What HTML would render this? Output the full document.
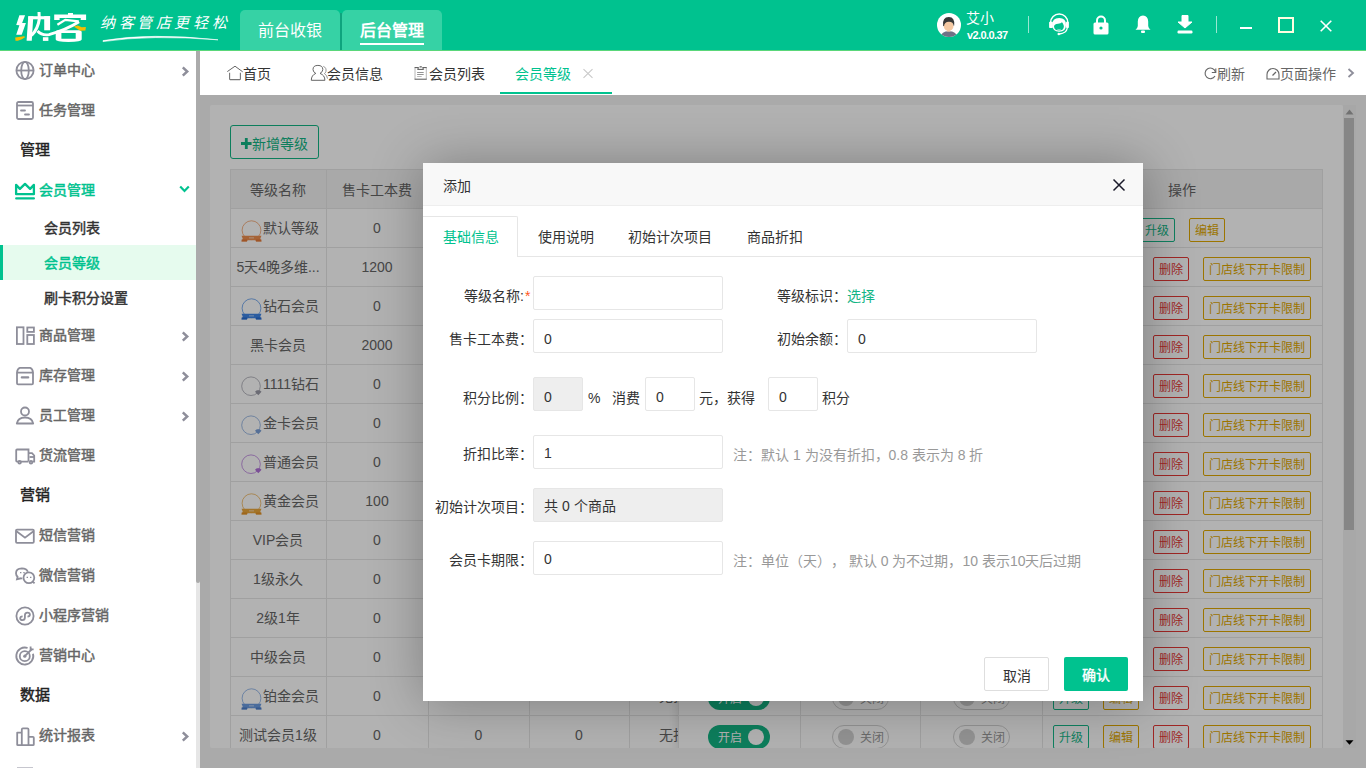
<!DOCTYPE html>
<html lang="zh-CN"><head><meta charset="utf-8"><title>nake</title>
<style>
*{box-sizing:border-box;}
html,body{margin:0;padding:0;}
body{text-spacing-trim:space-all;width:1366px;height:768px;overflow:hidden;position:relative;font-family:"Liberation Sans",sans-serif;font-size:14px;color:#333;background:#fff;}
.abs{position:absolute;}
.t{position:absolute;white-space:nowrap;line-height:20px;}
svg{position:absolute;overflow:visible;}
.side .it{position:absolute;left:39px;font-size:14px;color:#666;-webkit-text-stroke:0.45px currentColor;line-height:20px;white-space:nowrap;}
.side .sec{position:absolute;left:20px;font-size:15px;color:#222;-webkit-text-stroke:0.45px currentColor;line-height:20px;}
.side .sub{position:absolute;left:44px;font-size:14px;color:#333;-webkit-text-stroke:0.45px currentColor;line-height:20px;}
.cell{position:absolute;text-align:center;font-size:14px;color:#666;line-height:20px;white-space:nowrap;overflow:hidden;}
.btn{position:absolute;height:24px;border:1px solid;border-radius:2px;font-size:12px;line-height:24px;text-align:center;white-space:nowrap;}
.bg{border-color:#16b98a;color:#16b98a;}
.by{border-color:#e0a800;color:#e0a800;}
.br{border-color:#e53935;color:#e53935;}
.inp{position:absolute;border:1px solid #e6e6e6;border-radius:2px;background:#fff;font-size:14px;color:#333;}
.lbl{position:absolute;font-size:14px;color:#333;line-height:20px;white-space:nowrap;text-align:right;}
</style></head><body>

<div class="abs" style="left:0;top:0;width:1366px;height:50px;background:#00c28f"></div>
<div class="abs" style="left:0;top:50px;width:1366px;height:1px;background:#5ad77a"></div>
<svg style="left:0;top:0" width="100" height="50" viewBox="0 0 100 50"><g fill="#fff"><path d="M19.4 15.2 L25.1 15.2 L22.1 22.9 L25.9 22.9 L21.7 34.7 L16.2 34.7 L19.4 25.3 L16.2 25.1Z"/><path d="M28.3 16.2 L33.3 16.2 L31.8 40.7 L26.6 40.7Z"/><path d="M28.3 16.2 H50.1 V19.3 H28.3Z"/><path d="M44.2 16.2 H50.1 V30.3 H44.2Z"/><path d="M42.9 37.2 H48.4 V40.9 H42.9Z"/><path d="M68 13 H73 V15 H68Z"/><path d="M54.2 14.4 H86.1 V20.1 H80.7 V17.9 H59.6 V20.1 H54.2Z"/><path d="M55.7 32 Q55.7 30.3 58 30.3 H79.5 Q81.7 30.3 81.7 32 V39.5 Q81.7 41.9 68.5 41.9 Q55.7 41.9 55.7 39.5Z M61.4 33 V38.7 H75.7 V33Z" fill-rule="evenodd"/></g><path d="M39 12 L39.3 19 Q38 29 31.5 35.5" stroke="#fff" stroke-width="3" fill="none"/><path d="M57.4 24.8 L65.3 19.8 L78.7 21.4" stroke="#fff" stroke-width="2.2" fill="none"/><path d="M37.5 31 Q42 35.8 49 34.6 Q66 30 79 21.8" stroke="#fff" stroke-width="2.9" fill="none"/><path d="M15.2 37.5 L23.9 36.2 L25.4 37 L21.9 39.2 L17.9 40.7 L15.5 40.7Z" fill="#f6bd00"/><path d="M73.7 26.6 L77.7 25.6 L81.7 27.3 L85.9 27.1 L85.4 30.5 L80.2 30.8Z" fill="#f6bd00"/></svg>
<div class="t" style="left:100px;top:12px;font-family:'Liberation Serif',serif;font-size:15px;line-height:22px;color:#fff;letter-spacing:3.6px;font-style:italic;">纳客管店更轻松</div>
<svg style="left:100px;top:33px" width="130" height="10" viewBox="0 0 130 10"><path d="M3 7.6 Q50 -0.5 118 6.8 Q50 1.5 3 8.6Z" fill="#fff" stroke="#fff" stroke-width="0.6"/></svg>
<div class="abs" style="left:240px;top:10px;width:100px;height:40px;background:#36d2a5;border-radius:5px 5px 0 0"></div>
<div class="abs" style="left:342px;top:10px;width:100px;height:40px;background:#36d2a5;border-radius:5px 5px 0 0"></div>
<div class="abs" style="left:340px;top:13px;width:2px;height:37px;background:#0ea47e"></div>
<div class="t" style="left:258px;top:20px;font-size:16px;line-height:22px;color:#fff;">前台收银</div>
<div class="t" style="left:360px;top:20px;font-size:16px;line-height:22px;color:#fff;font-weight:bold;">后台管理</div>
<div class="abs" style="left:360px;top:43px;width:64px;height:2px;background:#fff"></div>
<svg style="left:937px;top:13px" width="24" height="24" viewBox="0 0 24 24"><circle cx="12" cy="12" r="12" fill="#fff"/><clipPath id="cc"><circle cx="12" cy="12" r="12"/></clipPath><g clip-path="url(#cc)"><path d="M3.5 24.5 Q4 18.2 11.8 18.2 Q19.6 18.2 20.5 24.5Z" fill="#6f7286"/><rect x="10.2" y="15" width="3" height="3.6" fill="#f2c4a0"/><ellipse cx="11.6" cy="12.9" rx="4.9" ry="5" fill="#f5c9a3"/><path d="M6.1 12.8 Q5.2 4 11.9 4.1 Q18 4.2 17.2 12.6 L16.6 12.8 Q16.3 8.6 11.8 8.7 Q7.4 8.8 7 13.2Z" fill="#383838"/></g></svg>
<div class="t" style="left:966px;top:8px;font-size:14px;line-height:20px;color:#fff;">艾小</div>
<div class="t" style="left:967px;top:27px;font-size:11px;line-height:14px;color:#fff;font-weight:bold;letter-spacing:-0.6px;margin-top:1px">v2.0.0.37</div>
<div class="abs" style="left:1028px;top:16px;width:1px;height:17px;background:rgba(255,255,255,.6)"></div>
<div class="abs" style="left:1216px;top:16px;width:1px;height:17px;background:rgba(255,255,255,.6)"></div>
<svg style="left:1045px;top:10px" width="30" height="30" viewBox="0 0 30 30"><path d="M5.6 12.5 A8.6 8.6 0 0 1 22.8 12.5" stroke="#fff" stroke-width="1.5" fill="none"/><path d="M7.3 15 Q7 8 14.2 8 Q21.2 8 21 15 Q21 21.8 14.2 21.8 Q7.5 21.8 7.3 15Z" fill="#fff"/><path d="M9 16.2 Q9.5 14.2 13 13.8 Q16 13.6 17 12.3 Q18.2 13.5 18.9 16 Q19 20.6 14 20.6 Q9.2 20.6 9 16.2Z" fill="#00c28f"/><path d="M12.3 19.3 Q14 20 15.8 19.3" stroke="#fff" stroke-width="0.8" fill="none" opacity=".6"/><rect x="4.1" y="11.7" width="3.8" height="6.3" rx="0.8" fill="#fff"/><rect x="21" y="11.7" width="2.9" height="6.3" rx="0.8" fill="#fff"/><path d="M22.3 18 Q21.5 23.2 14.5 24" stroke="#fff" stroke-width="1.3" fill="none"/><circle cx="13.8" cy="24" r="1.3" fill="#fff"/></svg>
<svg style="left:1093px;top:15px" width="16" height="20" viewBox="0 0 16 20"><path d="M4 8 V5.5 A4 4 0 0 1 12 5.5 V8" stroke="#fff" stroke-width="2" fill="none"/><rect x="0.5" y="7.5" width="15" height="12" rx="1.5" fill="#fff"/><circle cx="8" cy="13" r="1.6" fill="#00c28f"/></svg>
<svg style="left:1135px;top:15px" width="16" height="19" viewBox="0 0 16 19"><path d="M8 0.5 Q3 1 2.8 6.5 L2.8 11 Q2.5 13.5 0.5 14.8 L15.5 14.8 Q13.5 13.5 13.2 11 L13.2 6.5 Q13 1 8 0.5Z" fill="#fff"/><rect x="6" y="15.5" width="4" height="2.5" rx="1" fill="#fff"/></svg>
<svg style="left:1177px;top:15px" width="16" height="19" viewBox="0 0 16 19"><path d="M5 0.5 H11 V7 H15 L8 13 L1 7 H5Z" fill="#fff" stroke="#fff" stroke-width="1" stroke-linejoin="round"/><rect x="0.5" y="15.5" width="15" height="3" rx="1.2" fill="#fff"/></svg>
<div class="abs" style="left:1240px;top:27px;width:12px;height:2px;background:#fff"></div>
<div class="abs" style="left:1278px;top:17px;width:16px;height:16px;border:2px solid #fffde0"></div>
<svg style="left:1320px;top:20px" width="12" height="12" viewBox="0 0 12 12"><path d="M0.7 0.7 L11.3 11.3 M11.3 0.7 L0.7 11.3" stroke="#fff" stroke-width="1.6"/></svg>
<div class="side">
<div class="abs" style="left:196px;top:51px;width:4px;height:717px;background:#e6e6e6"></div>
<div class="abs" style="left:196px;top:51px;width:4px;height:532px;background:#ababab;border-radius:0 0 2px 2px"></div>
<svg style="left:15px;top:60px" width="20" height="20" viewBox="0 0 20 20"><circle cx="10" cy="10.5" r="8.6" stroke="#8e8e9a" stroke-width="1.8" fill="none"/><ellipse cx="10" cy="10.5" rx="3.8" ry="8.6" stroke="#8e8e9a" stroke-width="1.8" fill="none"/><path d="M1.5 10.5 H18.5" stroke="#8e8e9a" stroke-width="1.8" fill="none"/></svg>
<div class="it" style="top:60px">订单中心</div>
<svg style="left:181px;top:66px" width="8" height="11" viewBox="0 0 8 11"><path d="M1.8 1.4 L6.2 5.5 L1.8 9.6" stroke="#8e8e9a" stroke-width="2.5" fill="none"/></svg>
<svg style="left:16px;top:101px" width="20" height="20" viewBox="0 0 20 20"><rect x="1" y="1" width="16" height="17" rx="1.5" stroke="#8e8e9a" stroke-width="1.8" fill="none"/><path d="M1 4.5 H17" stroke="#8e8e9a" stroke-width="1.8" fill="none"/><path d="M5 9.5 H9 M9 13.5 H13" stroke="#8e8e9a" stroke-width="1.8" stroke-linecap="round"/></svg>
<div class="it" style="top:100px">任务管理</div>
<svg style="left:10px;top:175px" width="30" height="30" viewBox="0 0 30 30"><path d="M6.1 9.9 V19.2 H23.9 V9.9 L20.1 13.9 L15 8.9 L9.9 13.9 Z" stroke="#00c28f" stroke-width="2.3" stroke-linejoin="round" fill="none"/><rect x="5.1" y="22.3" width="19.9" height="2.3" rx="1.1" fill="#00c28f"/></svg>
<div class="it" style="top:180px;color:#00c28f">会员管理</div>
<svg style="left:179px;top:185px" width="11" height="8" viewBox="0 0 11 8"><path d="M1.2 1.5 L5.5 6 L9.8 1.5" stroke="#00c28f" stroke-width="2.2" fill="none"/></svg>
<svg style="left:15px;top:325px" width="20" height="20" viewBox="0 0 20 20"><rect x="1.9" y="2.3" width="6.6" height="16.7" stroke="#8e8e9a" stroke-width="1.8" fill="none"/><rect x="12.3" y="2.5" width="6.6" height="4.4" stroke="#8e8e9a" stroke-width="1.8" fill="none"/><rect x="12.3" y="10" width="6.6" height="9" stroke="#8e8e9a" stroke-width="1.8" fill="none"/></svg>
<div class="it" style="top:325px">商品管理</div>
<svg style="left:181px;top:331px" width="8" height="11" viewBox="0 0 8 11"><path d="M1.8 1.4 L6.2 5.5 L1.8 9.6" stroke="#8e8e9a" stroke-width="2.5" fill="none"/></svg>
<svg style="left:15px;top:365px" width="20" height="20" viewBox="0 0 20 20"><path d="M2 7.6 Q2.3 3.6 4.8 2.8 H15.2 Q17.7 3.6 18 7.6Z" stroke="#8e8e9a" stroke-width="1.8" fill="none" stroke-linejoin="round"/><path d="M2 7.6 V18.2 Q2 19.3 3.1 19.3 H16.9 Q18 19.3 18 18.2 V7.6" stroke="#8e8e9a" stroke-width="1.8" fill="none"/><path d="M6.8 12.4 H13.2" stroke="#8e8e9a" stroke-width="2.2" stroke-linecap="round"/></svg>
<div class="it" style="top:365px">库存管理</div>
<svg style="left:181px;top:371px" width="8" height="11" viewBox="0 0 8 11"><path d="M1.8 1.4 L6.2 5.5 L1.8 9.6" stroke="#8e8e9a" stroke-width="2.5" fill="none"/></svg>
<svg style="left:15px;top:405px" width="20" height="20" viewBox="0 0 20 20"><circle cx="10" cy="6.5" r="4" stroke="#8e8e9a" stroke-width="1.8" fill="none"/><path d="M1.8 18.5 Q3 12.5 10 12.5 Q17 12.5 18.2 18.5Z" stroke="#8e8e9a" stroke-width="1.8" fill="none" stroke-linejoin="round"/></svg>
<div class="it" style="top:405px">员工管理</div>
<svg style="left:181px;top:411px" width="8" height="11" viewBox="0 0 8 11"><path d="M1.8 1.4 L6.2 5.5 L1.8 9.6" stroke="#8e8e9a" stroke-width="2.5" fill="none"/></svg>
<svg style="left:15px;top:445px" width="22" height="20" viewBox="0 0 22 20"><path d="M13.5 16.6 H2 Q1.2 16.6 1.2 15.8 V5.3 Q1.2 4.5 2 4.5 H13.5 V16.6" stroke="#8e8e9a" stroke-width="1.8" fill="none"/><path d="M13.5 8.2 H17 L19.2 10.5 V16.6 H17.5" stroke="#8e8e9a" stroke-width="1.8" fill="none"/><path d="M14.5 12 H19" stroke="#8e8e9a" stroke-width="1.8" fill="none"/><circle cx="4.6" cy="17.3" r="1.3" fill="#fff" stroke="#8e8e9a" stroke-width="1.8" fill="none" stroke-width="1.4"/><circle cx="16" cy="17.3" r="1.3" fill="#fff" stroke="#8e8e9a" stroke-width="1.8" fill="none" stroke-width="1.4"/></svg>
<div class="it" style="top:445px">货流管理</div>
<svg style="left:15px;top:525px" width="20" height="20" viewBox="0 0 20 20"><rect x="1" y="4.6" width="17.8" height="13.2" rx="1" stroke="#8e8e9a" stroke-width="1.8" fill="none"/><path d="M1.5 6.3 L10 12.6 L18.5 6.3" stroke="#8e8e9a" stroke-width="1.8" fill="none"/></svg>
<div class="it" style="top:525px">短信营销</div>
<svg style="left:15px;top:565px" width="22" height="20" viewBox="0 0 22 20"><path d="M7.3 13.6 Q6.6 13.6 6 13.3 L2 14.2 L2.6 11.8 Q1 10.3 1 8.2 Q1 3.6 6.9 3.4 Q11.6 3.4 12.8 6.7" stroke="#8e8e9a" stroke-width="1.8" fill="none"/><circle cx="13.9" cy="12.7" r="5.4" stroke="#8e8e9a" stroke-width="1.8" fill="none"/><path d="M17.5 16.6 L19.6 18.3" stroke="#8e8e9a" stroke-width="1.8" fill="none"/><path d="M5 7.7 H6.4 M8.3 7.7 H9.7 M11.6 12.3 H13 M15 12.3 H16.4" stroke="#8e8e9a" stroke-width="1.3"/></svg>
<div class="it" style="top:565px">微信营销</div>
<svg style="left:15px;top:605px" width="20" height="20" viewBox="0 0 20 20"><circle cx="10" cy="11" r="8.6" stroke="#8e8e9a" stroke-width="1.8" fill="none"/><path d="M7.6 11.3 Q5.2 11.3 5.2 13.3 Q5.2 15.2 7.4 15.2 Q9.9 15.2 9.9 12.6 V10.2 Q9.9 7.6 12.4 7.6 Q14.9 7.6 14.9 9.6 Q14.9 11.6 12.5 11.6" stroke="#8e8e9a" stroke-width="1.8" fill="none"/></svg>
<div class="it" style="top:605px">小程序营销</div>
<svg style="left:15px;top:645px" width="20" height="20" viewBox="0 0 20 20"><path d="M18 8.8 A8.5 8.5 0 1 1 12.6 3" stroke="#8e8e9a" stroke-width="1.8" fill="none"/><circle cx="9.8" cy="11.2" r="5" stroke="#8e8e9a" stroke-width="1.8" fill="none"/><circle cx="9.8" cy="11.2" r="1.6" fill="#8e8e9a"/><path d="M9.8 11.2 L17 4" stroke="#8e8e9a" stroke-width="1.8" fill="none"/><path d="M15.6 1.5 L15.6 4.4 L18.6 4.4" stroke="#8e8e9a" stroke-width="1.8" fill="none" stroke-width="1.5"/></svg>
<div class="it" style="top:645px">营销中心</div>
<svg style="left:15px;top:725px" width="22" height="22" viewBox="0 0 22 22"><path d="M2.2 20.2 V7.6 H6.8 V20.2 M6.8 7.6 V4.4 Q6.8 3.3 7.9 3.3 H12.4 Q13.5 3.3 13.5 4.4 V20.2 M13.5 11.9 H17.9 Q18.8 11.9 18.8 12.8 V19.4 Q18.8 20.2 17.9 20.2 H3 Q2.2 20.2 2.2 19.4" stroke="#8e8e9a" stroke-width="1.8" fill="none" stroke-linejoin="round"/></svg>
<div class="it" style="top:725px">统计报表</div>
<svg style="left:181px;top:731px" width="8" height="11" viewBox="0 0 8 11"><path d="M1.8 1.4 L6.2 5.5 L1.8 9.6" stroke="#8e8e9a" stroke-width="2.5" fill="none"/></svg>
<div class="abs" style="left:17px;top:767px;width:16px;height:1px;background:#c6c6ce"></div>
<div class="sec" style="top:140px">管理</div>
<div class="sec" style="top:485px">营销</div>
<div class="sec" style="top:685px">数据</div>
<div class="abs" style="left:0;top:245px;width:196px;height:35px;background:#e6fbee"></div>
<div class="abs" style="left:0;top:245px;width:3px;height:35px;background:#00c28f"></div>
<div class="sub" style="top:218px">会员列表</div>
<div class="sub" style="top:253px;color:#00c28f">会员等级</div>
<div class="sub" style="top:288px">刷卡积分设置</div>
</div>
<svg style="left:227px;top:65px" width="16" height="15" viewBox="0 0 16 15"><path d="M0.3 6.6 L8 1.2 L15.7 6.8" stroke="#555" stroke-width="0.9" fill="none"/><path d="M2.6 7.8 V14 Q2.6 14.6 3.2 14.6 H12.8 Q13.4 14.6 13.4 14 V7.8" stroke="#777" stroke-width="1.1" fill="none"/></svg>
<div class="t" style="left:243px;top:64px;color:#333">首页</div>
<svg style="left:311px;top:65px" width="17" height="16" viewBox="0 0 17 16"><path d="M4.8 8.4 Q2 7 2 4.5 Q2 0.4 6.9 0.4 Q11.8 0.4 11.8 4.5 Q11.8 7 9 8.4 Q13.9 10.2 13.9 15.3 H0.3 Q0.3 10.2 4.8 8.4Z" stroke="#555" stroke-width="0.9" fill="none"/><path d="M12.3 1.3 Q15.8 2.8 14.9 6.6 Q14.5 7.9 13.4 8.6 Q16.3 10.4 16.5 13.6" stroke="#888" stroke-width="0.9" fill="none"/></svg>
<div class="t" style="left:327px;top:64px;color:#333">会员信息</div>
<svg style="left:414px;top:66px" width="14" height="14" viewBox="0 0 14 14"><path d="M1 1.5 V13.3 M12.3 1.5 V13.3" stroke="#b0b0b0" stroke-width="0.9"/><path d="M0.6 1.6 H4.6 M8.6 1.6 H12.7 M0.6 13.2 H12.7" stroke="#555" stroke-width="1"/><path d="M4.6 1.6 L3.6 3.4 H9.6 L8.6 1.6" stroke="#444" stroke-width="0.9" fill="none"/><rect x="5.6" y="0.2" width="2.2" height="1.3" fill="#666"/><path d="M3.1 6.5 H9.7 M3.1 8.5 H9.7" stroke="#777" stroke-width="0.8"/><path d="M3.1 10.5 H7.7" stroke="#aaa" stroke-width="0.8"/></svg>
<div class="t" style="left:429px;top:64px;color:#333">会员列表</div>
<div class="t" style="left:515px;top:64px;color:#00c28f">会员等级</div>
<svg style="left:583px;top:69px" width="10" height="9" viewBox="0 0 10 9"><path d="M0.5 0.2 L9.5 8.8 M9.5 0.2 L0.5 8.8" stroke="#c8c8c8" stroke-width="1.1"/></svg>
<div class="abs" style="left:500px;top:92px;width:112px;height:2px;background:#00c28f"></div>
<svg style="left:1204px;top:67px" width="13" height="13" viewBox="0 0 13 13"><path d="M11.5 5 A5.3 5.3 0 1 0 11 9" stroke="#666" stroke-width="1.1" fill="none"/><path d="M11.8 1.5 V5.5 H7.8" stroke="#666" stroke-width="1.1" fill="none"/></svg>
<div class="t" style="left:1217px;top:64px;color:#666">刷新</div>
<svg style="left:1266px;top:67px" width="14" height="13" viewBox="0 0 14 13"><path d="M1 12 V7.5 A6 6 0 0 1 13 7.5 V12Z" stroke="#666" stroke-width="1.1" fill="none"/><path d="M6.5 8.5 L10 5" stroke="#666" stroke-width="1.2"/></svg>
<div class="t" style="left:1280px;top:64px;color:#666">页面操作</div>
<svg style="left:1347px;top:68px" width="8" height="10" viewBox="0 0 8 10"><path d="M1.5 1 L6 5 L1.5 9" stroke="#8e8e9a" stroke-width="1.8" fill="none"/></svg>
<div class="abs" style="left:200px;top:95px;width:1166px;height:673px;background:#f4f4f4"></div>
<div class="abs" style="left:210px;top:105px;width:1133px;height:643px;background:#fff;border-radius:2px"></div>
<div class="abs" style="left:1343px;top:105px;width:13px;height:643px;background:#f1f1f1"></div>
<div class="abs" style="left:1344px;top:118px;width:10px;height:412px;background:#c1c1c1"></div>
<div class="abs" style="left:1343px;top:105px;width:13px;height:13px;background:#f0f0f0"></div>
<svg style="left:1345px;top:109px" width="9" height="6" viewBox="0 0 9 6"><path d="M0.5 5.5 L4.5 0.5 L8.5 5.5Z" fill="#a3a3a3"/></svg>
<div class="abs" style="left:230px;top:125px;width:89px;height:34px;border:1px solid #13b585;border-radius:3px"></div>
<svg style="left:241px;top:138px" width="11" height="11" viewBox="0 0 11 11"><path d="M5.3 0 V11 M0 5.5 H10.6" stroke="#13b585" stroke-width="2.8"/></svg>
<div class="t" style="left:252px;top:134px;font-size:14px;color:#13b585;">新增等级</div>
<div id="tbl" class="abs" style="left:230px;top:169px;width:1093px;height:579px;overflow:hidden">
<div class="abs" style="left:0;top:0;width:1092px;height:39px;background:#f2f2f2"></div>
<div class="abs" style="left:0;top:39px;width:1092px;height:1px;background:#e6e6e6"></div>
<div class="abs" style="left:0;top:78px;width:1092px;height:1px;background:#e6e6e6"></div>
<div class="abs" style="left:0;top:117px;width:1092px;height:1px;background:#e6e6e6"></div>
<div class="abs" style="left:0;top:156px;width:1092px;height:1px;background:#e6e6e6"></div>
<div class="abs" style="left:0;top:195px;width:1092px;height:1px;background:#e6e6e6"></div>
<div class="abs" style="left:0;top:234px;width:1092px;height:1px;background:#e6e6e6"></div>
<div class="abs" style="left:0;top:273px;width:1092px;height:1px;background:#e6e6e6"></div>
<div class="abs" style="left:0;top:312px;width:1092px;height:1px;background:#e6e6e6"></div>
<div class="abs" style="left:0;top:351px;width:1092px;height:1px;background:#e6e6e6"></div>
<div class="abs" style="left:0;top:390px;width:1092px;height:1px;background:#e6e6e6"></div>
<div class="abs" style="left:0;top:429px;width:1092px;height:1px;background:#e6e6e6"></div>
<div class="abs" style="left:0;top:468px;width:1092px;height:1px;background:#e6e6e6"></div>
<div class="abs" style="left:0;top:507px;width:1092px;height:1px;background:#e6e6e6"></div>
<div class="abs" style="left:0;top:546px;width:1092px;height:1px;background:#e6e6e6"></div>
<div class="abs" style="left:0;top:585px;width:1092px;height:1px;background:#e6e6e6"></div>
<div class="abs" style="left:0;top:0;width:1092px;height:1px;background:#e6e6e6"></div>
<div class="abs" style="left:0px;top:0;width:1px;height:600px;background:#e6e6e6"></div>
<div class="abs" style="left:96px;top:0;width:1px;height:600px;background:#e6e6e6"></div>
<div class="abs" style="left:198px;top:0;width:1px;height:600px;background:#e6e6e6"></div>
<div class="abs" style="left:299px;top:0;width:1px;height:600px;background:#e6e6e6"></div>
<div class="abs" style="left:399px;top:0;width:1px;height:600px;background:#e6e6e6"></div>
<div class="abs" style="left:448px;top:0;width:1px;height:600px;background:#e6e6e6"></div>
<div class="abs" style="left:570px;top:0;width:1px;height:600px;background:#e6e6e6"></div>
<div class="abs" style="left:690px;top:0;width:1px;height:600px;background:#e6e6e6"></div>
<div class="abs" style="left:812px;top:0;width:1px;height:600px;background:#e6e6e6"></div>
<div class="abs" style="left:1092px;top:0;width:1px;height:600px;background:#e6e6e6"></div>
<div class="cell" style="left:0;top:11px;width:96px;color:#666">等级名称</div>
<div class="cell" style="left:96px;top:11px;width:102px;color:#666">售卡工本费</div>
<div class="cell" style="left:812px;top:11px;width:280px;color:#666">操作</div>
<svg style="left:11px;top:51px" width="21" height="22" viewBox="0 0 21 22"><circle cx="10.5" cy="10.2" r="9.4" stroke="#ee8f4f" stroke-width="0.9" fill="none" opacity=".75"/><path d="M0.5 15.8 H20.5 L19.3 18.6 L20.5 21.5 H15 L14.3 20.3 H6.7 L6 21.5 H0.5 L1.7 18.6Z" fill="#ee8f4f"/><path d="M0.5 19.5 H6 L6 21.5 H0.5Z M15 19.5 H20.5 V21.5 H15Z" fill="#e07030" opacity=".7"/><rect x="8" y="17" width="5" height="1.6" fill="#fff" opacity=".35"/></svg>
<div class="cell" style="left:33px;top:49px;width:63px;text-align:left;overflow:visible">默认等级</div>
<div class="cell" style="left:96px;top:49px;width:102px">0</div>
<div class="cell" style="left:198px;top:49px;width:101px">0</div>
<div class="cell" style="left:299px;top:49px;width:100px">0</div>
<div class="cell" style="left:399px;top:49px;width:49px;text-align:left;"><span style="position:relative;left:30px">无折扣</span></div>
<div class="cell" style="left:0;top:88px;width:96px">5天4晚多维...</div>
<div class="cell" style="left:96px;top:88px;width:102px">1200</div>
<div class="cell" style="left:198px;top:88px;width:101px">0</div>
<div class="cell" style="left:299px;top:88px;width:100px">0</div>
<div class="cell" style="left:399px;top:88px;width:49px;text-align:left;"><span style="position:relative;left:30px">无折扣</span></div>
<svg style="left:11px;top:129px" width="21" height="22" viewBox="0 0 21 22"><circle cx="10.5" cy="10.2" r="9.4" stroke="#3f86e6" stroke-width="0.9" fill="none" opacity=".75"/><path d="M0.5 15.8 H20.5 L19.3 18.6 L20.5 21.5 H15 L14.3 20.3 H6.7 L6 21.5 H0.5 L1.7 18.6Z" fill="#3f86e6"/><path d="M0.5 19.5 H6 L6 21.5 H0.5Z M15 19.5 H20.5 V21.5 H15Z" fill="#1f63c8" opacity=".7"/><rect x="8" y="17" width="5" height="1.6" fill="#fff" opacity=".35"/></svg>
<div class="cell" style="left:33px;top:127px;width:63px;text-align:left;overflow:visible">钻石会员</div>
<div class="cell" style="left:96px;top:127px;width:102px">0</div>
<div class="cell" style="left:198px;top:127px;width:101px">0</div>
<div class="cell" style="left:299px;top:127px;width:100px">0</div>
<div class="cell" style="left:399px;top:127px;width:49px;text-align:left;"><span style="position:relative;left:30px">无折扣</span></div>
<div class="cell" style="left:0;top:166px;width:96px">黑卡会员</div>
<div class="cell" style="left:96px;top:166px;width:102px">2000</div>
<div class="cell" style="left:198px;top:166px;width:101px">0</div>
<div class="cell" style="left:299px;top:166px;width:100px">0</div>
<div class="cell" style="left:399px;top:166px;width:49px;text-align:left;"><span style="position:relative;left:30px">无折扣</span></div>
<svg style="left:11px;top:207px" width="21" height="22" viewBox="0 0 21 22"><circle cx="10" cy="10.2" r="9.3" stroke="#9a9aa6" stroke-width="0.9" fill="none" opacity=".8"/><path d="M14 15.8 L15.8 14.2 L18.8 14.2 L20.5 15.8 L17.3 19.3Z" fill="#9a9aa6"/></svg>
<div class="cell" style="left:33px;top:205px;width:63px;text-align:left;overflow:visible">1111钻石</div>
<div class="cell" style="left:96px;top:205px;width:102px">0</div>
<div class="cell" style="left:198px;top:205px;width:101px">0</div>
<div class="cell" style="left:299px;top:205px;width:100px">0</div>
<div class="cell" style="left:399px;top:205px;width:49px;text-align:left;"><span style="position:relative;left:30px">无折扣</span></div>
<svg style="left:11px;top:246px" width="21" height="22" viewBox="0 0 21 22"><circle cx="10" cy="10.2" r="9.3" stroke="#7aa0d8" stroke-width="0.9" fill="none" opacity=".8"/><path d="M14 15.8 L15.8 14.2 L18.8 14.2 L20.5 15.8 L17.3 19.3Z" fill="#7aa0d8"/></svg>
<div class="cell" style="left:33px;top:244px;width:63px;text-align:left;overflow:visible">金卡会员</div>
<div class="cell" style="left:96px;top:244px;width:102px">0</div>
<div class="cell" style="left:198px;top:244px;width:101px">0</div>
<div class="cell" style="left:299px;top:244px;width:100px">0</div>
<div class="cell" style="left:399px;top:244px;width:49px;text-align:left;"><span style="position:relative;left:30px">无折扣</span></div>
<svg style="left:11px;top:285px" width="21" height="22" viewBox="0 0 21 22"><circle cx="10" cy="10.2" r="9.3" stroke="#b070d8" stroke-width="0.9" fill="none" opacity=".8"/><path d="M14 15.8 L15.8 14.2 L18.8 14.2 L20.5 15.8 L17.3 19.3Z" fill="#b070d8"/></svg>
<div class="cell" style="left:33px;top:283px;width:63px;text-align:left;overflow:visible">普通会员</div>
<div class="cell" style="left:96px;top:283px;width:102px">0</div>
<div class="cell" style="left:198px;top:283px;width:101px">0</div>
<div class="cell" style="left:299px;top:283px;width:100px">0</div>
<div class="cell" style="left:399px;top:283px;width:49px;text-align:left;"><span style="position:relative;left:30px">无折扣</span></div>
<svg style="left:11px;top:324px" width="21" height="22" viewBox="0 0 21 22"><circle cx="10.5" cy="10.2" r="9.4" stroke="#eaa63c" stroke-width="0.9" fill="none" opacity=".75"/><path d="M0.5 15.8 H20.5 L19.3 18.6 L20.5 21.5 H15 L14.3 20.3 H6.7 L6 21.5 H0.5 L1.7 18.6Z" fill="#eaa63c"/><path d="M0.5 19.5 H6 L6 21.5 H0.5Z M15 19.5 H20.5 V21.5 H15Z" fill="#e08a20" opacity=".7"/><rect x="8" y="17" width="5" height="1.6" fill="#fff" opacity=".35"/></svg>
<div class="cell" style="left:33px;top:322px;width:63px;text-align:left;overflow:visible">黄金会员</div>
<div class="cell" style="left:96px;top:322px;width:102px">100</div>
<div class="cell" style="left:198px;top:322px;width:101px">0</div>
<div class="cell" style="left:299px;top:322px;width:100px">0</div>
<div class="cell" style="left:399px;top:322px;width:49px;text-align:left;"><span style="position:relative;left:30px">无折扣</span></div>
<div class="cell" style="left:0;top:361px;width:96px">VIP会员</div>
<div class="cell" style="left:96px;top:361px;width:102px">0</div>
<div class="cell" style="left:198px;top:361px;width:101px">0</div>
<div class="cell" style="left:299px;top:361px;width:100px">0</div>
<div class="cell" style="left:399px;top:361px;width:49px;text-align:left;"><span style="position:relative;left:30px">无折扣</span></div>
<div class="cell" style="left:0;top:400px;width:96px">1级永久</div>
<div class="cell" style="left:96px;top:400px;width:102px">0</div>
<div class="cell" style="left:198px;top:400px;width:101px">0</div>
<div class="cell" style="left:299px;top:400px;width:100px">0</div>
<div class="cell" style="left:399px;top:400px;width:49px;text-align:left;"><span style="position:relative;left:30px">无折扣</span></div>
<div class="cell" style="left:0;top:439px;width:96px">2级1年</div>
<div class="cell" style="left:96px;top:439px;width:102px">0</div>
<div class="cell" style="left:198px;top:439px;width:101px">0</div>
<div class="cell" style="left:299px;top:439px;width:100px">0</div>
<div class="cell" style="left:399px;top:439px;width:49px;text-align:left;"><span style="position:relative;left:30px">无折扣</span></div>
<div class="cell" style="left:0;top:478px;width:96px">中级会员</div>
<div class="cell" style="left:96px;top:478px;width:102px">0</div>
<div class="cell" style="left:198px;top:478px;width:101px">0</div>
<div class="cell" style="left:299px;top:478px;width:100px">0</div>
<div class="cell" style="left:399px;top:478px;width:49px;text-align:left;"><span style="position:relative;left:30px">无折扣</span></div>
<svg style="left:11px;top:519px" width="21" height="22" viewBox="0 0 21 22"><circle cx="10.5" cy="10.2" r="9.4" stroke="#6b9be0" stroke-width="0.9" fill="none" opacity=".75"/><path d="M0.5 15.8 H20.5 L19.3 18.6 L20.5 21.5 H15 L14.3 20.3 H6.7 L6 21.5 H0.5 L1.7 18.6Z" fill="#6b9be0"/><path d="M0.5 19.5 H6 L6 21.5 H0.5Z M15 19.5 H20.5 V21.5 H15Z" fill="#3f73c0" opacity=".7"/><rect x="8" y="17" width="5" height="1.6" fill="#fff" opacity=".35"/></svg>
<div class="cell" style="left:33px;top:517px;width:63px;text-align:left;overflow:visible">铂金会员</div>
<div class="cell" style="left:96px;top:517px;width:102px">0</div>
<div class="cell" style="left:198px;top:517px;width:101px">0</div>
<div class="cell" style="left:299px;top:517px;width:100px">0</div>
<div class="cell" style="left:399px;top:517px;width:49px;text-align:left;"><span style="position:relative;left:30px">无折扣</span></div>
<div class="cell" style="left:0;top:556px;width:96px">测试会员1级</div>
<div class="cell" style="left:96px;top:556px;width:102px">0</div>
<div class="cell" style="left:198px;top:556px;width:101px">0</div>
<div class="cell" style="left:299px;top:556px;width:100px">0</div>
<div class="cell" style="left:399px;top:556px;width:49px;text-align:left;"><span style="position:relative;left:30px">无折扣</span></div>
<div class="abs" style="left:448px;top:0;width:644px;height:600px;box-shadow:-2px 0 8px rgba(0,0,0,.10);background:transparent"></div>
<div class="abs" style="left:448px;top:39px;width:644px;height:561px;background:#fff"></div>
<div class="abs" style="left:448px;top:0;width:644px;height:39px;background:#f2f2f2"></div>
<div class="abs" style="left:448px;top:39px;width:644px;height:1px;background:#e6e6e6"></div>
<div class="abs" style="left:448px;top:78px;width:644px;height:1px;background:#e6e6e6"></div>
<div class="abs" style="left:448px;top:117px;width:644px;height:1px;background:#e6e6e6"></div>
<div class="abs" style="left:448px;top:156px;width:644px;height:1px;background:#e6e6e6"></div>
<div class="abs" style="left:448px;top:195px;width:644px;height:1px;background:#e6e6e6"></div>
<div class="abs" style="left:448px;top:234px;width:644px;height:1px;background:#e6e6e6"></div>
<div class="abs" style="left:448px;top:273px;width:644px;height:1px;background:#e6e6e6"></div>
<div class="abs" style="left:448px;top:312px;width:644px;height:1px;background:#e6e6e6"></div>
<div class="abs" style="left:448px;top:351px;width:644px;height:1px;background:#e6e6e6"></div>
<div class="abs" style="left:448px;top:390px;width:644px;height:1px;background:#e6e6e6"></div>
<div class="abs" style="left:448px;top:429px;width:644px;height:1px;background:#e6e6e6"></div>
<div class="abs" style="left:448px;top:468px;width:644px;height:1px;background:#e6e6e6"></div>
<div class="abs" style="left:448px;top:507px;width:644px;height:1px;background:#e6e6e6"></div>
<div class="abs" style="left:448px;top:546px;width:644px;height:1px;background:#e6e6e6"></div>
<div class="abs" style="left:448px;top:585px;width:644px;height:1px;background:#e6e6e6"></div>
<div class="abs" style="left:448px;top:0;width:644px;height:1px;background:#e6e6e6"></div>
<div class="abs" style="left:448px;top:0;width:1px;height:600px;background:#e6e6e6"></div>
<div class="abs" style="left:570px;top:0;width:1px;height:600px;background:#e6e6e6"></div>
<div class="abs" style="left:690px;top:0;width:1px;height:600px;background:#e6e6e6"></div>
<div class="abs" style="left:812px;top:0;width:1px;height:600px;background:#e6e6e6"></div>
<div class="abs" style="left:1092px;top:0;width:1px;height:600px;background:#e6e6e6"></div>
<div class="cell" style="left:812px;top:11px;width:280px;color:#666">操作</div>
<div class="abs" style="left:478px;top:49px;width:62px;height:24px;border-radius:12px;background:#13b585"></div>
<div class="t" style="left:488px;top:52px;font-size:12px;color:#fff">开启</div>
<div class="abs" style="left:518px;top:53px;width:16px;height:16px;border-radius:8px;background:#fff"></div>
<div class="abs" style="left:602px;top:49px;width:57px;height:24px;border-radius:12px;border:1px solid #d2d2d2;background:#fff"></div>
<div class="abs" style="left:608px;top:53px;width:16px;height:16px;border-radius:8px;background:#d2d2d2"></div>
<div class="t" style="left:630px;top:52px;font-size:12px;color:#999">关闭</div>
<div class="abs" style="left:723px;top:49px;width:57px;height:24px;border-radius:12px;border:1px solid #d2d2d2;background:#fff"></div>
<div class="abs" style="left:729px;top:53px;width:16px;height:16px;border-radius:8px;background:#d2d2d2"></div>
<div class="t" style="left:751px;top:52px;font-size:12px;color:#999">关闭</div>
<div class="btn bg" style="left:909px;top:49px;width:36px">升级</div>
<div class="btn by" style="left:959px;top:49px;width:36px">编辑</div>
<div class="abs" style="left:478px;top:88px;width:62px;height:24px;border-radius:12px;background:#13b585"></div>
<div class="t" style="left:488px;top:91px;font-size:12px;color:#fff">开启</div>
<div class="abs" style="left:518px;top:92px;width:16px;height:16px;border-radius:8px;background:#fff"></div>
<div class="abs" style="left:602px;top:88px;width:57px;height:24px;border-radius:12px;border:1px solid #d2d2d2;background:#fff"></div>
<div class="abs" style="left:608px;top:92px;width:16px;height:16px;border-radius:8px;background:#d2d2d2"></div>
<div class="t" style="left:630px;top:91px;font-size:12px;color:#999">关闭</div>
<div class="abs" style="left:723px;top:88px;width:57px;height:24px;border-radius:12px;border:1px solid #d2d2d2;background:#fff"></div>
<div class="abs" style="left:729px;top:92px;width:16px;height:16px;border-radius:8px;background:#d2d2d2"></div>
<div class="t" style="left:751px;top:91px;font-size:12px;color:#999">关闭</div>
<div class="btn bg" style="left:823px;top:88px;width:36px">升级</div>
<div class="btn by" style="left:873px;top:88px;width:36px">编辑</div>
<div class="btn br" style="left:923px;top:88px;width:36px">删除</div>
<div class="btn by" style="left:973px;top:88px;width:108px">门店线下开卡限制</div>
<div class="abs" style="left:478px;top:127px;width:62px;height:24px;border-radius:12px;background:#13b585"></div>
<div class="t" style="left:488px;top:130px;font-size:12px;color:#fff">开启</div>
<div class="abs" style="left:518px;top:131px;width:16px;height:16px;border-radius:8px;background:#fff"></div>
<div class="abs" style="left:602px;top:127px;width:57px;height:24px;border-radius:12px;border:1px solid #d2d2d2;background:#fff"></div>
<div class="abs" style="left:608px;top:131px;width:16px;height:16px;border-radius:8px;background:#d2d2d2"></div>
<div class="t" style="left:630px;top:130px;font-size:12px;color:#999">关闭</div>
<div class="abs" style="left:723px;top:127px;width:57px;height:24px;border-radius:12px;border:1px solid #d2d2d2;background:#fff"></div>
<div class="abs" style="left:729px;top:131px;width:16px;height:16px;border-radius:8px;background:#d2d2d2"></div>
<div class="t" style="left:751px;top:130px;font-size:12px;color:#999">关闭</div>
<div class="btn bg" style="left:823px;top:127px;width:36px">升级</div>
<div class="btn by" style="left:873px;top:127px;width:36px">编辑</div>
<div class="btn br" style="left:923px;top:127px;width:36px">删除</div>
<div class="btn by" style="left:973px;top:127px;width:108px">门店线下开卡限制</div>
<div class="abs" style="left:478px;top:166px;width:62px;height:24px;border-radius:12px;background:#13b585"></div>
<div class="t" style="left:488px;top:169px;font-size:12px;color:#fff">开启</div>
<div class="abs" style="left:518px;top:170px;width:16px;height:16px;border-radius:8px;background:#fff"></div>
<div class="abs" style="left:602px;top:166px;width:57px;height:24px;border-radius:12px;border:1px solid #d2d2d2;background:#fff"></div>
<div class="abs" style="left:608px;top:170px;width:16px;height:16px;border-radius:8px;background:#d2d2d2"></div>
<div class="t" style="left:630px;top:169px;font-size:12px;color:#999">关闭</div>
<div class="abs" style="left:723px;top:166px;width:57px;height:24px;border-radius:12px;border:1px solid #d2d2d2;background:#fff"></div>
<div class="abs" style="left:729px;top:170px;width:16px;height:16px;border-radius:8px;background:#d2d2d2"></div>
<div class="t" style="left:751px;top:169px;font-size:12px;color:#999">关闭</div>
<div class="btn bg" style="left:823px;top:166px;width:36px">升级</div>
<div class="btn by" style="left:873px;top:166px;width:36px">编辑</div>
<div class="btn br" style="left:923px;top:166px;width:36px">删除</div>
<div class="btn by" style="left:973px;top:166px;width:108px">门店线下开卡限制</div>
<div class="abs" style="left:478px;top:205px;width:62px;height:24px;border-radius:12px;background:#13b585"></div>
<div class="t" style="left:488px;top:208px;font-size:12px;color:#fff">开启</div>
<div class="abs" style="left:518px;top:209px;width:16px;height:16px;border-radius:8px;background:#fff"></div>
<div class="abs" style="left:602px;top:205px;width:57px;height:24px;border-radius:12px;border:1px solid #d2d2d2;background:#fff"></div>
<div class="abs" style="left:608px;top:209px;width:16px;height:16px;border-radius:8px;background:#d2d2d2"></div>
<div class="t" style="left:630px;top:208px;font-size:12px;color:#999">关闭</div>
<div class="abs" style="left:723px;top:205px;width:57px;height:24px;border-radius:12px;border:1px solid #d2d2d2;background:#fff"></div>
<div class="abs" style="left:729px;top:209px;width:16px;height:16px;border-radius:8px;background:#d2d2d2"></div>
<div class="t" style="left:751px;top:208px;font-size:12px;color:#999">关闭</div>
<div class="btn bg" style="left:823px;top:205px;width:36px">升级</div>
<div class="btn by" style="left:873px;top:205px;width:36px">编辑</div>
<div class="btn br" style="left:923px;top:205px;width:36px">删除</div>
<div class="btn by" style="left:973px;top:205px;width:108px">门店线下开卡限制</div>
<div class="abs" style="left:478px;top:244px;width:62px;height:24px;border-radius:12px;background:#13b585"></div>
<div class="t" style="left:488px;top:247px;font-size:12px;color:#fff">开启</div>
<div class="abs" style="left:518px;top:248px;width:16px;height:16px;border-radius:8px;background:#fff"></div>
<div class="abs" style="left:602px;top:244px;width:57px;height:24px;border-radius:12px;border:1px solid #d2d2d2;background:#fff"></div>
<div class="abs" style="left:608px;top:248px;width:16px;height:16px;border-radius:8px;background:#d2d2d2"></div>
<div class="t" style="left:630px;top:247px;font-size:12px;color:#999">关闭</div>
<div class="abs" style="left:723px;top:244px;width:57px;height:24px;border-radius:12px;border:1px solid #d2d2d2;background:#fff"></div>
<div class="abs" style="left:729px;top:248px;width:16px;height:16px;border-radius:8px;background:#d2d2d2"></div>
<div class="t" style="left:751px;top:247px;font-size:12px;color:#999">关闭</div>
<div class="btn bg" style="left:823px;top:244px;width:36px">升级</div>
<div class="btn by" style="left:873px;top:244px;width:36px">编辑</div>
<div class="btn br" style="left:923px;top:244px;width:36px">删除</div>
<div class="btn by" style="left:973px;top:244px;width:108px">门店线下开卡限制</div>
<div class="abs" style="left:478px;top:283px;width:62px;height:24px;border-radius:12px;background:#13b585"></div>
<div class="t" style="left:488px;top:286px;font-size:12px;color:#fff">开启</div>
<div class="abs" style="left:518px;top:287px;width:16px;height:16px;border-radius:8px;background:#fff"></div>
<div class="abs" style="left:602px;top:283px;width:57px;height:24px;border-radius:12px;border:1px solid #d2d2d2;background:#fff"></div>
<div class="abs" style="left:608px;top:287px;width:16px;height:16px;border-radius:8px;background:#d2d2d2"></div>
<div class="t" style="left:630px;top:286px;font-size:12px;color:#999">关闭</div>
<div class="abs" style="left:723px;top:283px;width:57px;height:24px;border-radius:12px;border:1px solid #d2d2d2;background:#fff"></div>
<div class="abs" style="left:729px;top:287px;width:16px;height:16px;border-radius:8px;background:#d2d2d2"></div>
<div class="t" style="left:751px;top:286px;font-size:12px;color:#999">关闭</div>
<div class="btn bg" style="left:823px;top:283px;width:36px">升级</div>
<div class="btn by" style="left:873px;top:283px;width:36px">编辑</div>
<div class="btn br" style="left:923px;top:283px;width:36px">删除</div>
<div class="btn by" style="left:973px;top:283px;width:108px">门店线下开卡限制</div>
<div class="abs" style="left:478px;top:322px;width:62px;height:24px;border-radius:12px;background:#13b585"></div>
<div class="t" style="left:488px;top:325px;font-size:12px;color:#fff">开启</div>
<div class="abs" style="left:518px;top:326px;width:16px;height:16px;border-radius:8px;background:#fff"></div>
<div class="abs" style="left:602px;top:322px;width:57px;height:24px;border-radius:12px;border:1px solid #d2d2d2;background:#fff"></div>
<div class="abs" style="left:608px;top:326px;width:16px;height:16px;border-radius:8px;background:#d2d2d2"></div>
<div class="t" style="left:630px;top:325px;font-size:12px;color:#999">关闭</div>
<div class="abs" style="left:723px;top:322px;width:57px;height:24px;border-radius:12px;border:1px solid #d2d2d2;background:#fff"></div>
<div class="abs" style="left:729px;top:326px;width:16px;height:16px;border-radius:8px;background:#d2d2d2"></div>
<div class="t" style="left:751px;top:325px;font-size:12px;color:#999">关闭</div>
<div class="btn bg" style="left:823px;top:322px;width:36px">升级</div>
<div class="btn by" style="left:873px;top:322px;width:36px">编辑</div>
<div class="btn br" style="left:923px;top:322px;width:36px">删除</div>
<div class="btn by" style="left:973px;top:322px;width:108px">门店线下开卡限制</div>
<div class="abs" style="left:478px;top:361px;width:62px;height:24px;border-radius:12px;background:#13b585"></div>
<div class="t" style="left:488px;top:364px;font-size:12px;color:#fff">开启</div>
<div class="abs" style="left:518px;top:365px;width:16px;height:16px;border-radius:8px;background:#fff"></div>
<div class="abs" style="left:602px;top:361px;width:57px;height:24px;border-radius:12px;border:1px solid #d2d2d2;background:#fff"></div>
<div class="abs" style="left:608px;top:365px;width:16px;height:16px;border-radius:8px;background:#d2d2d2"></div>
<div class="t" style="left:630px;top:364px;font-size:12px;color:#999">关闭</div>
<div class="abs" style="left:723px;top:361px;width:57px;height:24px;border-radius:12px;border:1px solid #d2d2d2;background:#fff"></div>
<div class="abs" style="left:729px;top:365px;width:16px;height:16px;border-radius:8px;background:#d2d2d2"></div>
<div class="t" style="left:751px;top:364px;font-size:12px;color:#999">关闭</div>
<div class="btn bg" style="left:823px;top:361px;width:36px">升级</div>
<div class="btn by" style="left:873px;top:361px;width:36px">编辑</div>
<div class="btn br" style="left:923px;top:361px;width:36px">删除</div>
<div class="btn by" style="left:973px;top:361px;width:108px">门店线下开卡限制</div>
<div class="abs" style="left:478px;top:400px;width:62px;height:24px;border-radius:12px;background:#13b585"></div>
<div class="t" style="left:488px;top:403px;font-size:12px;color:#fff">开启</div>
<div class="abs" style="left:518px;top:404px;width:16px;height:16px;border-radius:8px;background:#fff"></div>
<div class="abs" style="left:602px;top:400px;width:57px;height:24px;border-radius:12px;border:1px solid #d2d2d2;background:#fff"></div>
<div class="abs" style="left:608px;top:404px;width:16px;height:16px;border-radius:8px;background:#d2d2d2"></div>
<div class="t" style="left:630px;top:403px;font-size:12px;color:#999">关闭</div>
<div class="abs" style="left:723px;top:400px;width:57px;height:24px;border-radius:12px;border:1px solid #d2d2d2;background:#fff"></div>
<div class="abs" style="left:729px;top:404px;width:16px;height:16px;border-radius:8px;background:#d2d2d2"></div>
<div class="t" style="left:751px;top:403px;font-size:12px;color:#999">关闭</div>
<div class="btn bg" style="left:823px;top:400px;width:36px">升级</div>
<div class="btn by" style="left:873px;top:400px;width:36px">编辑</div>
<div class="btn br" style="left:923px;top:400px;width:36px">删除</div>
<div class="btn by" style="left:973px;top:400px;width:108px">门店线下开卡限制</div>
<div class="abs" style="left:478px;top:439px;width:62px;height:24px;border-radius:12px;background:#13b585"></div>
<div class="t" style="left:488px;top:442px;font-size:12px;color:#fff">开启</div>
<div class="abs" style="left:518px;top:443px;width:16px;height:16px;border-radius:8px;background:#fff"></div>
<div class="abs" style="left:602px;top:439px;width:57px;height:24px;border-radius:12px;border:1px solid #d2d2d2;background:#fff"></div>
<div class="abs" style="left:608px;top:443px;width:16px;height:16px;border-radius:8px;background:#d2d2d2"></div>
<div class="t" style="left:630px;top:442px;font-size:12px;color:#999">关闭</div>
<div class="abs" style="left:723px;top:439px;width:57px;height:24px;border-radius:12px;border:1px solid #d2d2d2;background:#fff"></div>
<div class="abs" style="left:729px;top:443px;width:16px;height:16px;border-radius:8px;background:#d2d2d2"></div>
<div class="t" style="left:751px;top:442px;font-size:12px;color:#999">关闭</div>
<div class="btn bg" style="left:823px;top:439px;width:36px">升级</div>
<div class="btn by" style="left:873px;top:439px;width:36px">编辑</div>
<div class="btn br" style="left:923px;top:439px;width:36px">删除</div>
<div class="btn by" style="left:973px;top:439px;width:108px">门店线下开卡限制</div>
<div class="abs" style="left:478px;top:478px;width:62px;height:24px;border-radius:12px;background:#13b585"></div>
<div class="t" style="left:488px;top:481px;font-size:12px;color:#fff">开启</div>
<div class="abs" style="left:518px;top:482px;width:16px;height:16px;border-radius:8px;background:#fff"></div>
<div class="abs" style="left:602px;top:478px;width:57px;height:24px;border-radius:12px;border:1px solid #d2d2d2;background:#fff"></div>
<div class="abs" style="left:608px;top:482px;width:16px;height:16px;border-radius:8px;background:#d2d2d2"></div>
<div class="t" style="left:630px;top:481px;font-size:12px;color:#999">关闭</div>
<div class="abs" style="left:723px;top:478px;width:57px;height:24px;border-radius:12px;border:1px solid #d2d2d2;background:#fff"></div>
<div class="abs" style="left:729px;top:482px;width:16px;height:16px;border-radius:8px;background:#d2d2d2"></div>
<div class="t" style="left:751px;top:481px;font-size:12px;color:#999">关闭</div>
<div class="btn bg" style="left:823px;top:478px;width:36px">升级</div>
<div class="btn by" style="left:873px;top:478px;width:36px">编辑</div>
<div class="btn br" style="left:923px;top:478px;width:36px">删除</div>
<div class="btn by" style="left:973px;top:478px;width:108px">门店线下开卡限制</div>
<div class="abs" style="left:478px;top:517px;width:62px;height:24px;border-radius:12px;background:#13b585"></div>
<div class="t" style="left:488px;top:520px;font-size:12px;color:#fff">开启</div>
<div class="abs" style="left:518px;top:521px;width:16px;height:16px;border-radius:8px;background:#fff"></div>
<div class="abs" style="left:602px;top:517px;width:57px;height:24px;border-radius:12px;border:1px solid #d2d2d2;background:#fff"></div>
<div class="abs" style="left:608px;top:521px;width:16px;height:16px;border-radius:8px;background:#d2d2d2"></div>
<div class="t" style="left:630px;top:520px;font-size:12px;color:#999">关闭</div>
<div class="abs" style="left:723px;top:517px;width:57px;height:24px;border-radius:12px;border:1px solid #d2d2d2;background:#fff"></div>
<div class="abs" style="left:729px;top:521px;width:16px;height:16px;border-radius:8px;background:#d2d2d2"></div>
<div class="t" style="left:751px;top:520px;font-size:12px;color:#999">关闭</div>
<div class="btn bg" style="left:823px;top:517px;width:36px">升级</div>
<div class="btn by" style="left:873px;top:517px;width:36px">编辑</div>
<div class="btn br" style="left:923px;top:517px;width:36px">删除</div>
<div class="btn by" style="left:973px;top:517px;width:108px">门店线下开卡限制</div>
<div class="abs" style="left:478px;top:556px;width:62px;height:24px;border-radius:12px;background:#13b585"></div>
<div class="t" style="left:488px;top:559px;font-size:12px;color:#fff">开启</div>
<div class="abs" style="left:518px;top:560px;width:16px;height:16px;border-radius:8px;background:#fff"></div>
<div class="abs" style="left:602px;top:556px;width:57px;height:24px;border-radius:12px;border:1px solid #d2d2d2;background:#fff"></div>
<div class="abs" style="left:608px;top:560px;width:16px;height:16px;border-radius:8px;background:#d2d2d2"></div>
<div class="t" style="left:630px;top:559px;font-size:12px;color:#999">关闭</div>
<div class="abs" style="left:723px;top:556px;width:57px;height:24px;border-radius:12px;border:1px solid #d2d2d2;background:#fff"></div>
<div class="abs" style="left:729px;top:560px;width:16px;height:16px;border-radius:8px;background:#d2d2d2"></div>
<div class="t" style="left:751px;top:559px;font-size:12px;color:#999">关闭</div>
<div class="btn bg" style="left:823px;top:556px;width:36px">升级</div>
<div class="btn by" style="left:873px;top:556px;width:36px">编辑</div>
<div class="btn br" style="left:923px;top:556px;width:36px">删除</div>
<div class="btn by" style="left:973px;top:556px;width:108px">门店线下开卡限制</div>
</div>
<div class="abs" style="left:200px;top:95px;width:1166px;height:673px;background:rgba(0,0,0,.3)"></div>
<svg style="left:1345px;top:740px" width="9" height="5" viewBox="0 0 9 5"><path d="M0.5 0.2 L8.5 0.2 L4.5 4.8Z" fill="#000"/></svg>
<div class="abs" style="left:423px;top:163px;width:720px;height:538px;background:#fff;box-shadow:1px 1px 50px rgba(0,0,0,.3)"></div>
<div class="abs" style="left:423px;top:163px;width:720px;height:43px;background:#f8f8f8;border-bottom:1px solid #eee"></div>
<div class="t" style="left:443px;top:176px;color:#333">添加</div>
<svg style="left:1113px;top:179px" width="12" height="12" viewBox="0 0 12 12"><path d="M0.5 0.5 L11.5 11.5 M11.5 0.5 L0.5 11.5" stroke="#1a1a2a" stroke-width="1.5"/></svg>
<div class="abs" style="left:423px;top:256px;width:720px;height:1px;background:#e6e6e6"></div>
<div class="abs" style="left:423px;top:216px;width:95px;height:41px;background:#fff;border:1px solid #e6e6e6;border-left:none;border-bottom:none;border-radius:0 2px 0 0"></div>
<div class="t" style="left:443px;top:227px;color:#00c28f">基础信息</div>
<div class="t" style="left:538px;top:227px;color:#333">使用说明</div>
<div class="t" style="left:628px;top:227px;color:#333">初始计次项目</div>
<div class="t" style="left:747px;top:227px;color:#333">商品折扣</div>
<div class="lbl" style="left:423px;top:286px;width:101px">等级名称:</div>
<div class="t" style="left:525px;top:286px;color:#ff5722">*</div>
<div class="inp" style="left:533px;top:276px;width:190px;height:34px;background:#fff"></div>
<div class="lbl" style="left:423px;top:329px;width:110px">售卡工本费：</div>
<div class="inp" style="left:533px;top:319px;width:190px;height:34px;background:#fff"></div>
<div class="t" style="left:544px;top:329px;color:#333">0</div>
<div class="t" style="left:777px;top:286px;color:#333">等级标识：<span style="color:#13b585">选择</span></div>
<div class="t" style="left:777px;top:329px;color:#333">初始余额：</div>
<div class="inp" style="left:847px;top:319px;width:190px;height:34px;background:#fff"></div>
<div class="t" style="left:858px;top:329px;color:#333">0</div>
<div class="lbl" style="left:423px;top:388px;width:110px">积分比例：</div>
<div class="inp" style="left:533px;top:377px;width:50px;height:34px;background:#eee"></div>
<div class="t" style="left:544px;top:387px;color:#333">0</div>
<div class="t" style="left:588px;top:388px;color:#333">%</div>
<div class="t" style="left:612px;top:388px;color:#333">消费</div>
<div class="inp" style="left:645px;top:377px;width:50px;height:34px;background:#fff"></div>
<div class="t" style="left:656px;top:387px;color:#333">0</div>
<div class="t" style="left:699px;top:388px;color:#333">元，获得</div>
<div class="inp" style="left:768px;top:377px;width:50px;height:34px;background:#fff"></div>
<div class="t" style="left:779px;top:387px;color:#333">0</div>
<div class="t" style="left:822px;top:388px;color:#333">积分</div>
<div class="lbl" style="left:423px;top:444px;width:110px">折扣比率：</div>
<div class="inp" style="left:533px;top:435px;width:190px;height:34px;background:#fff"></div>
<div class="t" style="left:544px;top:443px;color:#333">1</div>
<div class="t" style="left:733px;top:445px;color:#999">注：默认 1 为没有折扣，0.8 表示为 8 折</div>
<div class="lbl" style="left:423px;top:497px;width:110px">初始计次项目：</div>
<div class="inp" style="left:533px;top:488px;width:190px;height:34px;background:#eee"></div>
<div class="t" style="left:544px;top:496px;color:#333">共 0 个商品</div>
<div class="lbl" style="left:423px;top:550px;width:110px">会员卡期限：</div>
<div class="inp" style="left:533px;top:541px;width:190px;height:34px;background:#fff"></div>
<div class="t" style="left:544px;top:549px;color:#333">0</div>
<div class="t" style="left:733px;top:551px;color:#999">注：单位（天）， 默认 0 为不过期，10 表示10天后过期</div>
<div class="abs" style="left:984px;top:657px;width:65px;height:34px;border:1px solid #dedede;border-radius:2px;background:#fff"></div>
<div class="t" style="left:1003px;top:666px;color:#333">取消</div>
<div class="abs" style="left:1064px;top:657px;width:64px;height:34px;border-radius:2px;background:#00c28f"></div>
<div class="t" style="left:1082px;top:665px;color:#fff;-webkit-text-stroke:0.4px #fff">确认</div>
</body></html>
